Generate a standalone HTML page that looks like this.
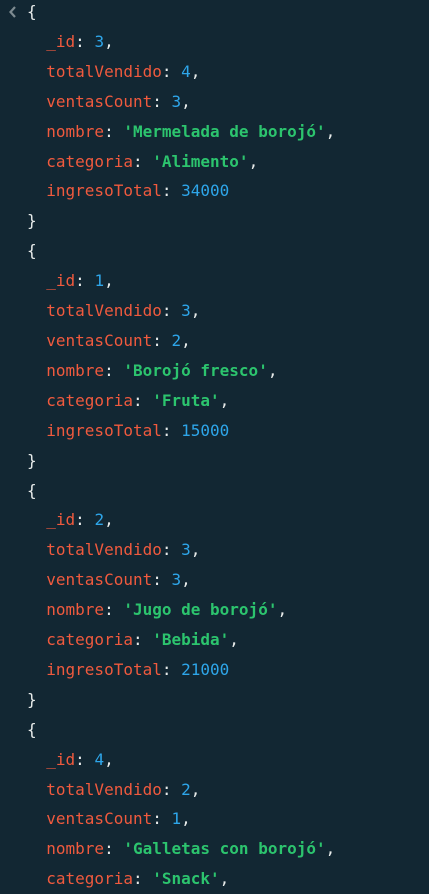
<!DOCTYPE html>
<html><head><meta charset="utf-8"><style>
html,body{margin:0;padding:0;background:#122733;width:429px;height:875px;overflow:hidden}
pre{margin:0;position:absolute;left:27px;top:-3px;font-family:"DejaVu Sans Mono","Liberation Mono",monospace;font-size:16px;line-height:29.9px;color:#e8eceb}
.k{color:#f05a3e}.n{color:#2ea6ea}.s{color:#2cc46e;font-weight:bold}
.chev{position:absolute;left:8px;top:5px}
</style></head><body>
<svg class="chev" width="10" height="14" viewBox="0 0 10 14"><path d="M7 2 L2.5 7 L7 12" stroke="#7d8a90" stroke-width="2.2" fill="none"/></svg>
<pre>{
  <span class="k">_id</span>: <span class="n">3</span>,
  <span class="k">totalVendido</span>: <span class="n">4</span>,
  <span class="k">ventasCount</span>: <span class="n">3</span>,
  <span class="k">nombre</span>: <span class="s">'Mermelada de borojó'</span>,
  <span class="k">categoria</span>: <span class="s">'Alimento'</span>,
  <span class="k">ingresoTotal</span>: <span class="n">34000</span>
}
{
  <span class="k">_id</span>: <span class="n">1</span>,
  <span class="k">totalVendido</span>: <span class="n">3</span>,
  <span class="k">ventasCount</span>: <span class="n">2</span>,
  <span class="k">nombre</span>: <span class="s">'Borojó fresco'</span>,
  <span class="k">categoria</span>: <span class="s">'Fruta'</span>,
  <span class="k">ingresoTotal</span>: <span class="n">15000</span>
}
{
  <span class="k">_id</span>: <span class="n">2</span>,
  <span class="k">totalVendido</span>: <span class="n">3</span>,
  <span class="k">ventasCount</span>: <span class="n">3</span>,
  <span class="k">nombre</span>: <span class="s">'Jugo de borojó'</span>,
  <span class="k">categoria</span>: <span class="s">'Bebida'</span>,
  <span class="k">ingresoTotal</span>: <span class="n">21000</span>
}
{
  <span class="k">_id</span>: <span class="n">4</span>,
  <span class="k">totalVendido</span>: <span class="n">2</span>,
  <span class="k">ventasCount</span>: <span class="n">1</span>,
  <span class="k">nombre</span>: <span class="s">'Galletas con borojó'</span>,
  <span class="k">categoria</span>: <span class="s">'Snack'</span>,
</pre>
</body></html>
